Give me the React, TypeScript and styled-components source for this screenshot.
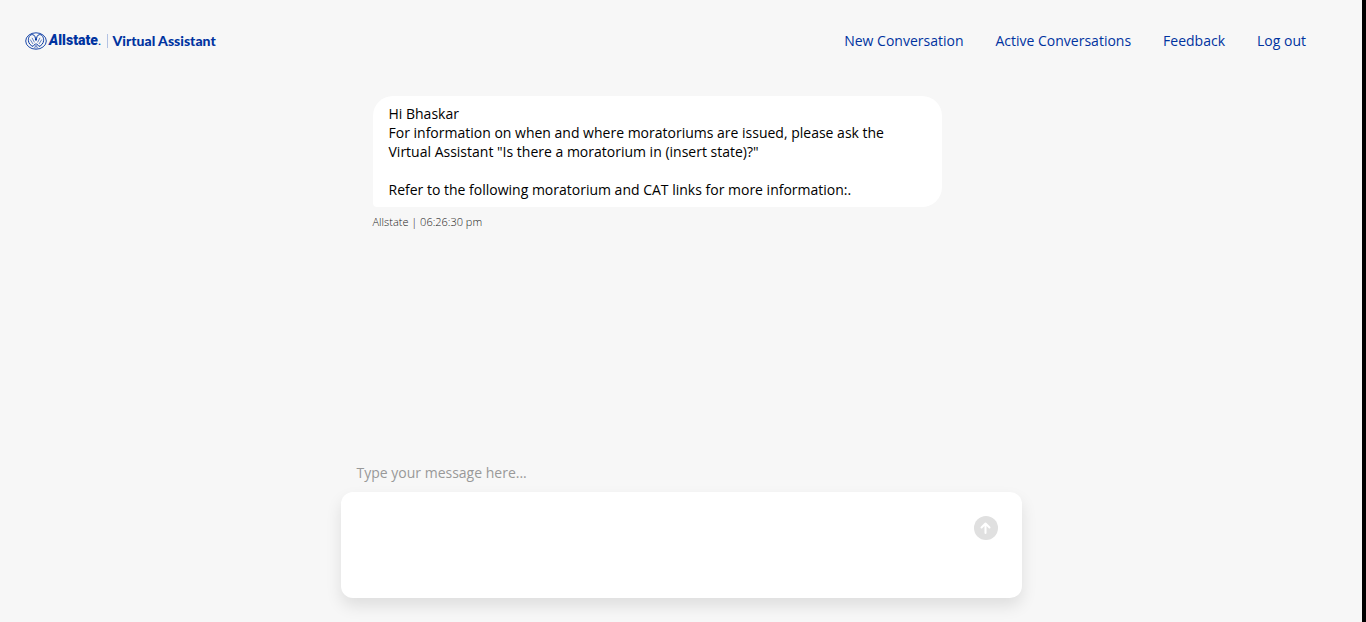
import React, { useState } from 'react';
import styled, { createGlobalStyle } from 'styled-components';

const BLUE = '#0033a0';

const GlobalStyle = createGlobalStyle`
  *, *::before, *::after { box-sizing: border-box; }
  body {
    margin: 0;
    background: #f7f7f7;
    color: #000;
    font-family: "Open Sans", "Noto Sans", sans-serif;
    font-size: 14px;
    line-height: 19px;
  }
`;

const Page = styled.div`
  display: flex;
  flex-direction: column;
  min-height: 100vh;
  background: #f7f7f7;
  border-right: 4px solid #000;
`;

const Header = styled.header`
  display: flex;
  align-items: center;
  justify-content: space-between;
  padding: 31px 56px 32px 25px;
`;

const Brand = styled.a`
  display: flex;
  align-items: center;
  color: ${BLUE};
  text-decoration: none;
  white-space: nowrap;
`;

const Emblem = styled.svg`
  width: 22px;
  height: 18px;
  margin-right: 2px;
`;

const Wordmark = styled.span`
  font-family: Roboto, sans-serif;
  font-size: 14px;
  font-weight: 900;
`;

const Slanted = styled.span`
  font-style: italic;
`;

const Dot = styled.span`
  font-weight: 400;
`;

const Product = styled.span`
  margin-left: 5px;
  padding-left: 5px;
  border-left: 1px solid #b3c2e3;
  font-family: Lato, sans-serif;
  font-size: 14px;
  line-height: 14px;
  font-weight: 900;
`;

const Nav = styled.nav`
  display: flex;
  gap: 32px;
`;

const NavLink = styled.a`
  color: ${BLUE};
  text-decoration: none;
`;

const Chat = styled.main`
  display: flex;
  flex: 1;
  flex-direction: column;
  width: 50%;
  margin: 0 auto;
  padding: 14px 0 24px;
`;

const Messages = styled.section`
  flex: 1;
  padding: 0 80px 0 32px;
`;

const Bubble = styled.div`
  padding: 8px 16px;
  border-radius: 20px 20px 20px 4px;
  background: #fff;
`;

const Paragraph = styled.p`
  margin: 0;

  & + &:last-child { margin-top: 19px; }
`;

const Meta = styled.p`
  margin: 5px 0 0;
  color: #222;
  font-size: 11px;
  font-weight: 300;
`;

const Composer = styled.form`
  display: flex;
  flex-direction: column;
  gap: 10px;
`;

const Label = styled.label`
  padding-left: 16px;
  color: #999;
`;

const InputBox = styled.div`
  display: flex;
  align-items: flex-start;
  gap: 16px;
  padding: 24px;
  border-radius: 12px;
  background: #fff;
  box-shadow: 0 8px 16px rgba(0, 0, 0, 0.1);
`;

const TextArea = styled.textarea`
  flex: 1;
  height: 58px;
  padding: 0;
  border: 0;
  outline: 0;
  resize: none;
  background: transparent;
  color: inherit;
  font: inherit;
`;

const SendButton = styled.button`
  display: flex;
  width: 24px;
  height: 24px;
  padding: 0;
  border: 0;
  border-radius: 50%;
  background: #e0e0e0;
  color: #fff;
`;

const links = ['New Conversation', 'Active Conversations', 'Feedback', 'Log out'];

function AllstateEmblem() {
  return (
    <Emblem viewBox="0 0 22 18" fill="none" stroke={BLUE} aria-hidden="true">
      <ellipse cx="11" cy="9" rx="10.3" ry="8.2" strokeWidth="0.9" />
      <path d="M10.6 8.5C10.6 5 9.6 2.8 7.4 2.6C4.8 2.5 3.2 5.4 3.4 8.6C3.6 11.4 5.6 13.6 8 14.4L10.6 11.6" strokeWidth="1" />
      <path d="M11.4 8.5C11.4 5 12.4 2.8 14.6 2.6C17.2 2.5 18.8 5.4 18.6 8.6C18.4 11.4 16.4 13.6 14 14.4L11.4 11.6" strokeWidth="1" />
      <path d="M5.2 7.5L8 12M7 5.8L9.4 10.4M16.8 7.5L14 12M15 5.8L12.6 10.4" strokeWidth="0.6" />
      <path d="M9 16L11 13.6L13 16M11 12V16.6" strokeWidth="0.5" />
    </Emblem>
  );
}

export default function App() {
  const [draft, setDraft] = useState('');

  return (
    <>
      <GlobalStyle />
      <Page>
        <Header>
          <Brand href="#home">
            <AllstateEmblem />
            <Wordmark><Slanted>A</Slanted>llstate<Dot>.</Dot></Wordmark>
            <Product>Virtual Assistant</Product>
          </Brand>
          <Nav>
            {links.map((link) => (
              <NavLink key={link} href="#">{link}</NavLink>
            ))}
          </Nav>
        </Header>
        <Chat>
          <Messages>
            <Bubble>
              <Paragraph>Hi Bhaskar</Paragraph>
              <Paragraph>
                For information on when and where moratoriums are issued, please ask the
                Virtual Assistant "Is there a moratorium in (insert state)?"
              </Paragraph>
              <Paragraph>
                Refer to the following moratorium and CAT links for more information:.
              </Paragraph>
            </Bubble>
            <Meta>Allstate | 06:26:30 pm</Meta>
          </Messages>
          <Composer onSubmit={(event) => event.preventDefault()}>
            <Label htmlFor="message">Type your message here...</Label>
            <InputBox>
              <TextArea
                id="message"
                value={draft}
                onChange={(event) => setDraft(event.target.value)}
              />
              <SendButton type="submit" aria-label="Send message">
                <svg width="24" height="24" viewBox="0 0 24 24" fill="none" stroke="currentColor" strokeWidth="2" strokeLinecap="round" strokeLinejoin="round">
                  <path d="M11.5 17V8M7.5 11.5L11.5 7.5L15.5 11.5" />
                </svg>
              </SendButton>
            </InputBox>
          </Composer>
        </Chat>
      </Page>
    </>
  );
}
